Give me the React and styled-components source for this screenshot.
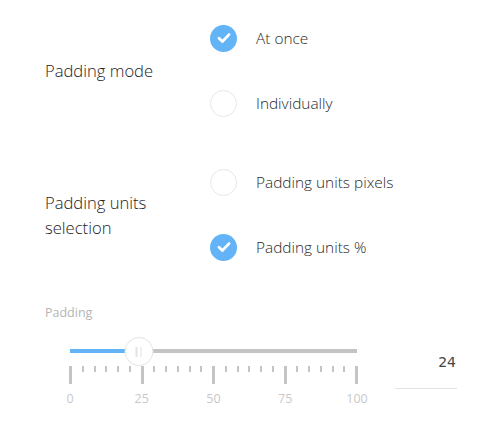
import React from "react";
import styled, { createGlobalStyle } from "styled-components";

const Global = createGlobalStyle`
  html, body { margin: 0; padding: 0; background: #fff; }
  body { font-family: "Open Sans", "Lato", "Noto Sans", sans-serif; color: #3d3d3d; }
`;

const Page = styled.div`
  width: 499px;
  height: 446px;
  box-sizing: border-box;
  padding: 24px 42px 0 45px;
  display: flex;
  flex-direction: column;
`;

const FieldRow = styled.div`
  display: grid;
  grid-template-columns: 165px 1fr;
  align-items: center;
  margin-bottom: ${(p) => p.$mb || 0}px;
`;

const FieldLabel = styled.div`
  font-size: 16.6px;
  font-weight: 300;
  line-height: 25px;
  color: #222;
  width: 125px;
`;

const Options = styled.div`
  display: flex;
  flex-direction: column;
  gap: 37px;
`;

const Option = styled.label`
  display: flex;
  align-items: center;
  gap: 19px;
  height: 28px;
  font-size: 15.4px;
  font-weight: 300;
  color: #2a2a2a;
`;

const Radio = styled.span`
  width: 27px;
  height: 27px;
  box-sizing: border-box;
  border-radius: 50%;
  flex: none;
  display: flex;
  align-items: center;
  justify-content: center;
  background: ${(p) => (p.$checked ? "#62b4f6" : "#fff")};
  border: ${(p) => (p.$checked ? "none" : "1.5px solid #e6e6e6")};
`;

const SliderBlock = styled.div`
  display: flex;
  flex-direction: column;
`;

const SmallLabel = styled.div`
  font-family: "Open Sans", "Noto Sans", sans-serif;
  font-size: 12.5px;
  color: #b5b5b5;
  line-height: 18px;
`;

const SliderRow = styled.div`
  display: flex;
  align-items: flex-start;
  margin-top: 15px;
`;

const SliderArea = styled.div`
  width: 287px;
  margin-left: 25px;
  display: flex;
  flex-direction: column;
`;

const TrackWrap = styled.div`
  position: relative;
  height: 28px;
  display: flex;
  align-items: center;
`;

const Track = styled.div`
  width: 100%;
  height: 4px;
  background: #c4c4c4;
  position: relative;
`;

const Fill = styled.div`
  position: absolute;
  left: 0;
  top: 0;
  height: 100%;
  background: #62b4f6;
`;

const Thumb = styled.div`
  position: absolute;
  top: 0;
  width: 29px;
  height: 29px;
  box-sizing: border-box;
  border-radius: 50%;
  border: 1.5px solid #e4e4e4;
  background: #fff;
  transform: translateX(-50%);
  display: flex;
  align-items: center;
  justify-content: center;
  gap: 3px;
  &::before, &::after {
    content: "";
    width: 1.5px;
    height: 10px;
    background: #e2e2e2;
  }
`;

const Ticks = styled.div`
  display: flex;
  justify-content: space-between;
  align-items: flex-start;
  height: 20px;
  margin: 1px -1px 0 -1px;
`;

const Tick = styled.span`
  width: ${(p) => (p.$major ? 3 : 2)}px;
  height: ${(p) => (p.$major ? 18 : 6)}px;
  background: #c4c4c4;
`;

const TickLabels = styled.div`
  position: relative;
  height: 18px;
  margin-top: 4px;
`;

const TickLabel = styled.span`
  position: absolute;
  top: 0;
  transform: translateX(-50%);
  font-family: "Open Sans", "Noto Sans", sans-serif;
  font-size: 12.5px;
  color: #c8c8c8;
  line-height: 18px;
`;

const ValueBox = styled.div`
  margin-left: 38px;
  width: 62px;
  height: 52px;
  box-sizing: border-box;
  border-bottom: 1px solid #e2e2e2;
  text-align: right;
  font-family: "DejaVu Sans", sans-serif;
  font-size: 14px;
  color: #444;
  padding-top: 17px;
  padding-right: 1px;
`;

const Check = () => (
  <svg width="14" height="12" viewBox="0 0 14 12">
    <path d="M2 6.3 L5.4 9.5 L12 2.6" fill="none" stroke="#fff" strokeWidth="2.8" strokeLinecap="round" strokeLinejoin="round" />
  </svg>
);

const RadioOption = ({ checked, children }) => (
  <Option>
    <Radio $checked={checked}>{checked && <Check />}</Radio>
    {children}
  </Option>
);

export default function App() {
  const value = 24;
  const ticks = Array.from({ length: 25 }, (_, i) => i);
  return (
    <>
      <Global />
      <Page>
        <FieldRow $mb={51}>
          <FieldLabel>Padding mode</FieldLabel>
          <Options>
            <RadioOption checked>At once</RadioOption>
            <RadioOption>Individually</RadioOption>
          </Options>
        </FieldRow>
        <FieldRow $mb={43}>
          <FieldLabel>Padding units selection</FieldLabel>
          <Options>
            <RadioOption>Padding units pixels</RadioOption>
            <RadioOption checked>Padding units %</RadioOption>
          </Options>
        </FieldRow>
        <SliderBlock>
          <SmallLabel>Padding</SmallLabel>
          <SliderRow>
            <SliderArea>
              <TrackWrap>
                <Track>
                  <Fill style={{ width: `${value}%` }} />
                </Track>
                <Thumb style={{ left: `${value}%` }} />
              </TrackWrap>
              <Ticks>
                {ticks.map((i) => (
                  <Tick key={i} $major={i % 6 === 0} />
                ))}
              </Ticks>
              <TickLabels>
                {[0, 25, 50, 75, 100].map((v) => (
                  <TickLabel key={v} style={{ left: `${v}%` }}>{v}</TickLabel>
                ))}
              </TickLabels>
            </SliderArea>
            <ValueBox>{value}</ValueBox>
          </SliderRow>
        </SliderBlock>
      </Page>
    </>
  );
}
